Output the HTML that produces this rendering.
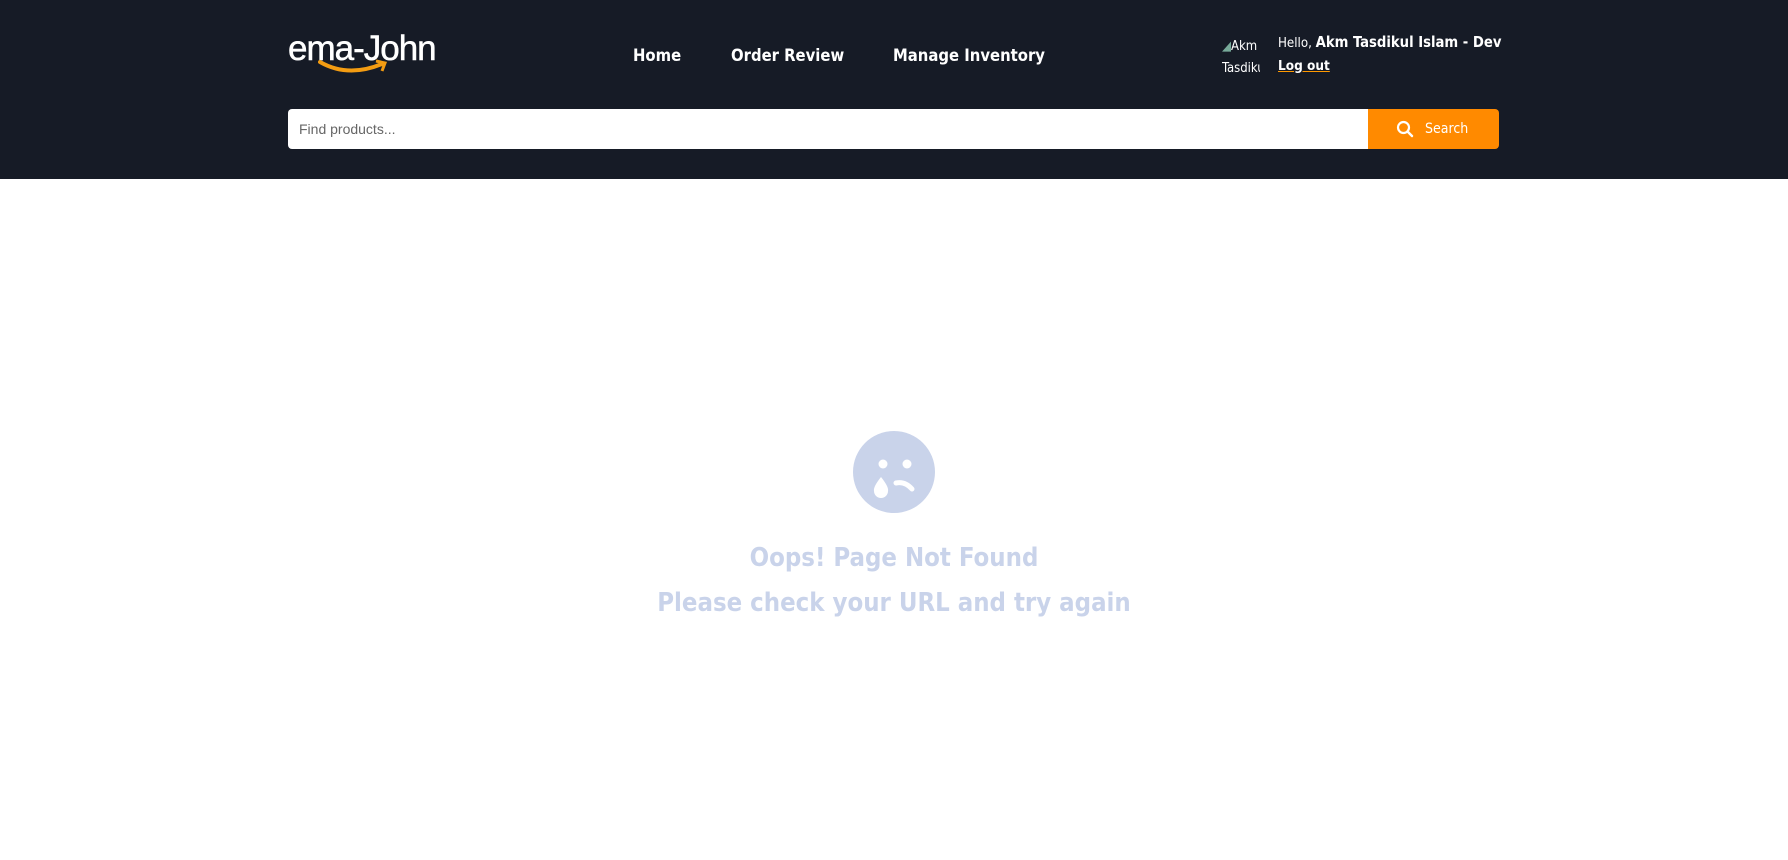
<!DOCTYPE html>
<html><head><style>
*{margin:0;padding:0;box-sizing:border-box}
body{width:1788px;height:860px;background:#fff;font-family:"DejaVu Sans Condensed","Liberation Sans",sans-serif;position:relative;overflow:hidden}
.hdr{position:absolute;left:0;top:0;width:1788px;height:179px;background:#161b26}
.logo{position:absolute;left:288px;top:29px;color:#fff;font-family:"Liberation Sans",sans-serif;font-size:35px;letter-spacing:-1px;-webkit-text-stroke:0.5px #fff}
.nav{position:absolute;top:46px;color:#fff;font-size:16.5px;font-weight:bold}
.av{position:absolute;left:1222px;top:36px;color:#fff;font-size:13px;line-height:22px;width:38px;overflow:hidden;white-space:nowrap}
.hello{position:absolute;left:1278px;top:34px;color:#fff;font-size:13.2px}
.hello b{font-size:14.7px}
.lo{position:absolute;left:1278px;top:58px;color:#fff;font-size:13.5px;font-weight:bold;text-decoration:underline;text-decoration-color:#f90}
.inp{position:absolute;left:288px;top:109px;width:1080px;height:40px;background:#fff;border-radius:4px 0 0 4px;color:#666;font-size:14px;line-height:40px;padding-left:11px;font-family:"Liberation Sans",sans-serif}
.btn{position:absolute;left:1368px;top:109px;width:131px;height:40px;background:#ff8a00;border-radius:0 4px 4px 0;color:#fff;font-size:14px;line-height:40px;padding-left:57px}
.btn svg{position:absolute;left:28px;top:11px}
.t{position:absolute;left:0;width:1788px;text-align:center;color:#c9d3ea;font-weight:bold;font-size:25.5px}
</style></head><body>
<div class="hdr">
<div class="logo">ema-John</div>
<svg style="position:absolute;left:318px;top:58px" width="74" height="20"><path d="M2 4 Q30 20 64 6" stroke="#f39c12" stroke-width="4" fill="none" stroke-linecap="round"/><path d="M58 3 L67 5 L64 13" stroke="#f39c12" stroke-width="3" fill="none"/></svg>
<div class="nav" style="left:633px">Home</div>
<div class="nav" style="left:731px">Order Review</div>
<div class="nav" style="left:893px">Manage Inventory</div>
<div class="av"><span style="color:#7a9">◢</span>Akm<br>Tasdikul</div>
<div class="hello">Hello, <b>Akm Tasdikul Islam - Dev</b></div>
<div class="lo">Log out</div>
<div class="inp">Find products...</div>
<div class="btn"><svg width="18" height="18" viewBox="0 0 18 18"><circle cx="7.5" cy="7.5" r="5.5" stroke="#fff" stroke-width="2.2" fill="none"/><path d="M11.5 11.5 L16 16" stroke="#fff" stroke-width="2.4" stroke-linecap="round"/></svg>Search</div>
</div>
<svg style="position:absolute;left:853px;top:431px" width="82" height="82" viewBox="0 0 82 82"><circle cx="41" cy="41" r="41" fill="#c9d3ea"/><circle cx="30" cy="33" r="4.5" fill="#fff"/><circle cx="54" cy="33" r="4.5" fill="#fff"/><path d="M28 46 Q20 56 21 60 A7 7 0 0 0 35 60 Q36 56 28 46Z" fill="#fff"/><path d="M43 52 Q52 50 59 58" stroke="#fff" stroke-width="5" fill="none" stroke-linecap="round"/></svg>
<div class="t" style="top:543px">Oops! Page Not Found</div>
<div class="t" style="top:588px">Please check your URL and try again</div>
</body></html>
